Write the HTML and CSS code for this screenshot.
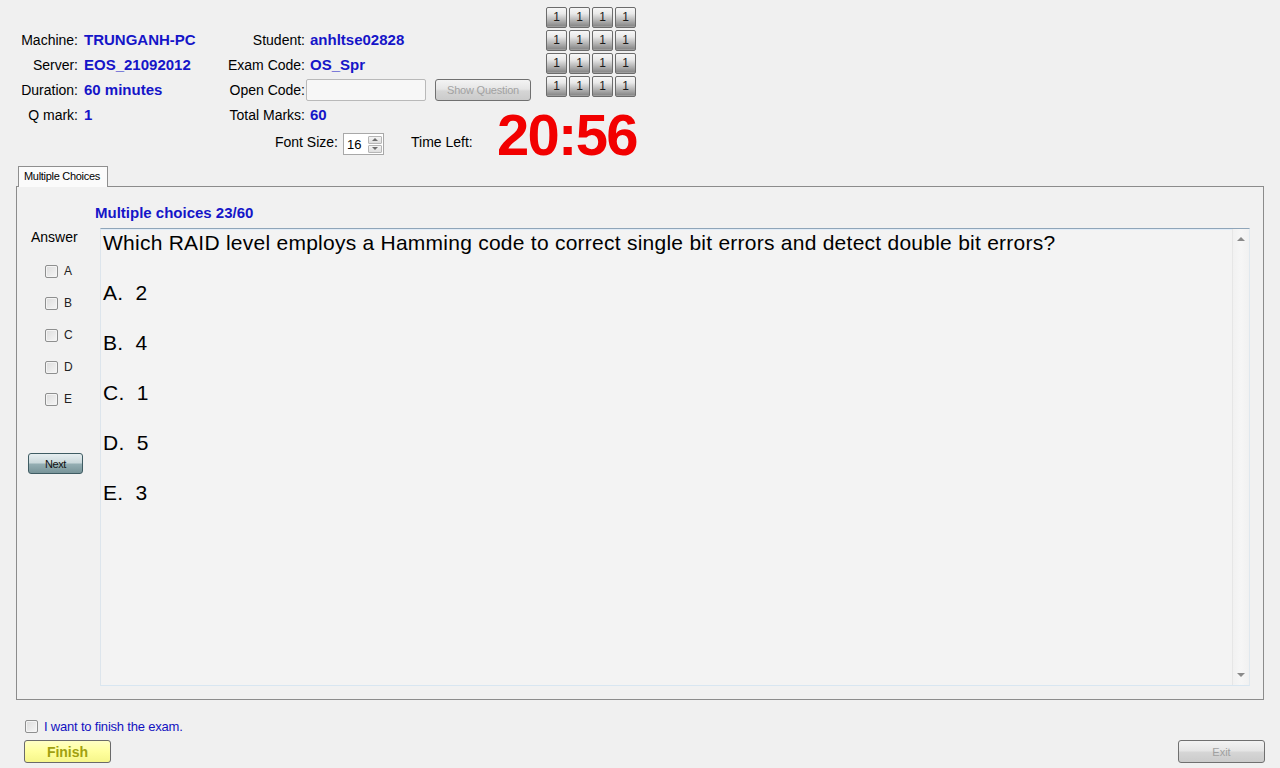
FILE: index.html
```html
<!DOCTYPE html>
<html>
<head>
<meta charset="utf-8">
<title>EOS Exam</title>
<link rel="stylesheet" href="styles.css">
</head>
<body>
<div class="header">
  <div class="info">
    <span class="lbl">Machine:</span><span class="val">TRUNGANH-PC</span><span class="lbl">Student:</span><span class="val v2">anhltse02828</span>
    <span class="lbl">Server:</span><span class="val">EOS_21092012</span><span class="lbl">Exam Code:</span><span class="val v2">OS_Spr</span>
    <span class="lbl">Duration:</span><span class="val">60 minutes</span><span class="lbl">Open Code:</span><span class="opencode"><span class="input"></span><span class="btn show">Show Question</span></span>
    <span class="lbl">Q mark:</span><span class="val">1</span><span class="lbl">Total Marks:</span><span class="val v2">60</span>
  </div>
  <div class="qgrid">
    <span class="qbtn">1</span><span class="qbtn">1</span><span class="qbtn">1</span><span class="qbtn">1</span>
    <span class="qbtn">1</span><span class="qbtn">1</span><span class="qbtn">1</span><span class="qbtn">1</span>
    <span class="qbtn">1</span><span class="qbtn">1</span><span class="qbtn">1</span><span class="qbtn">1</span>
    <span class="qbtn">1</span><span class="qbtn">1</span><span class="qbtn">1</span><span class="qbtn">1</span>
  </div>
  <div class="fontrow">
    <span class="fs-label">Font Size:</span>
    <span class="spinner"><span class="spin-val">16</span><span class="spin-btns"><span class="spin-up"><i class="tri-up"></i></span><span class="spin-down"><i class="tri-down"></i></span></span></span>
    <span class="tl-label">Time Left:</span>
    <span class="timer">20:56</span>
  </div>
</div>

<div class="tabs"><span class="tab">Multiple Choices</span></div>
<div class="panel">
  <div class="answers">
    <div class="ans-title">Answer</div>
    <div class="opt"><span class="cb"></span><span class="opt-l">A</span></div>
    <div class="opt"><span class="cb"></span><span class="opt-l">B</span></div>
    <div class="opt"><span class="cb"></span><span class="opt-l">C</span></div>
    <div class="opt"><span class="cb"></span><span class="opt-l">D</span></div>
    <div class="opt"><span class="cb"></span><span class="opt-l">E</span></div>
    <div class="next">Next</div>
  </div>
  <div class="qarea">
    <div class="qtitle">Multiple choices 23/60</div>
    <div class="qbox">
      <div class="qtext">
        <p>Which RAID level employs a Hamming code to correct single bit errors and detect double bit errors?</p>
        <p>A.  2</p>
        <p>B.  4</p>
        <p>C.  1</p>
        <p>D.  5</p>
        <p>E.  3</p>
      </div>
      <div class="vscroll"><i class="sb-up"></i><i class="sb-down"></i></div>
    </div>
  </div>
</div>

<div class="finish-check"><span class="cb"></span><span class="fc-text">I want to finish the exam.</span></div>
<div class="bottom">
  <span class="btn finish">Finish</span>
  <span class="btn exit">Exit</span>
</div>
</body>
</html>
```

FILE: styles.css
```css
html, body {
  margin: 0;
  padding: 0;
  width: 1280px;
  height: 768px;
  overflow: hidden;
  background: #f0f0f0;
  font-family: "Liberation Sans", Arial, sans-serif;
  color: #000;
}

.header {
  display: grid;
  grid-template-columns: 545px auto;
  grid-template-rows: 128px 28px;
  height: 166px;
}

.info {
  display: grid;
  grid-template-columns: 78px 144px 83px auto;
  grid-auto-rows: 25px;
  align-items: center;
  padding-top: 27px;
  font-size: 14px;
}

.lbl {
  text-align: right;
  white-space: nowrap;
}

.val {
  padding-left: 6px;
  font-size: 15px;
  font-weight: bold;
  color: #1515c8;
  white-space: nowrap;
}

.val.v2 {
  padding-left: 5px;
}

.opencode {
  display: flex;
  align-items: center;
}

.input {
  margin-left: 1px;
  width: 118px;
  height: 20px;
  border: 1px solid #b9b9b9;
  border-radius: 2px;
  background: #f7f7f7;
}

.btn {
  display: inline-flex;
  align-items: center;
  justify-content: center;
  box-sizing: border-box;
  border: 1px solid #707070;
  border-radius: 3px;
  background: linear-gradient(#f3f3f3 0%, #e6e6e6 45%, #d5d5d5 55%, #cbcbcb 100%);
  white-space: nowrap;
}

.show {
  margin-left: 9px;
  width: 96px;
  height: 22px;
  font-size: 11px;
  letter-spacing: -0.2px;
  color: #a2a2a2;
}

.qgrid {
  display: grid;
  grid-template-columns: repeat(4, 21px);
  grid-auto-rows: 21px;
  gap: 2px;
  padding-top: 7px;
  margin-left: 1px;
  align-content: start;
}

.qbtn {
  display: flex;
  align-items: center;
  justify-content: center;
  box-sizing: border-box;
  border: 1px solid #6c6c6c;
  border-radius: 2px;
  background: linear-gradient(#f7f7f7 0%, #e9e9e9 30%, #b5b5b5 65%, #8c8c8c 92%, #a5a5a5 100%);
  font-size: 12px;
  color: #1a1a1a;
  padding-bottom: 2px;
}

.fontrow {
  grid-column: 1 / 3;
  display: flex;
  align-items: center;
  font-size: 14px;
}

.fs-label {
  width: 338px;
  text-align: right;
}

.spinner {
  margin-left: 5px;
  margin-top: 4px;
  width: 41px;
  height: 22px;
  box-sizing: border-box;
  border: 1px solid #a8a8a8;
  background: #fff;
  display: flex;
  align-items: center;
  justify-content: space-between;
}

.spin-val {
  padding-left: 3px;
  font-size: 13px;
}

.spin-btns {
  display: flex;
  flex-direction: column;
  gap: 1px;
  margin-right: 1px;
}

.spin-up, .spin-down {
  width: 14px;
  height: 8px;
  box-sizing: border-box;
  border: 1px solid #b6b6b6;
  border-radius: 1px;
  background: linear-gradient(#f4f4f4, #dedede);
  display: flex;
  align-items: center;
  justify-content: center;
}

.tri-up {
  width: 0;
  height: 0;
  border-left: 3px solid transparent;
  border-right: 3px solid transparent;
  border-bottom: 3px solid #6d6d6d;
}

.tri-down {
  width: 0;
  height: 0;
  border-left: 3px solid transparent;
  border-right: 3px solid transparent;
  border-top: 3px solid #6d6d6d;
}

.tl-label {
  margin-left: 27px;
  width: 86px;
}

.timer {
  font-size: 58px;
  font-weight: bold;
  color: #f20000;
  letter-spacing: -1.7px;
  line-height: 44px;
  margin-bottom: 15px;
  white-space: nowrap;
}

.tabs {
  display: flex;
  padding-left: 18px;
}

.tab {
  position: relative;
  z-index: 1;
  box-sizing: border-box;
  width: 90px;
  height: 21px;
  margin-bottom: -1px;
  padding-left: 5px;
  border: 1px solid #8f8f8f;
  border-bottom: none;
  background: #fbfbfb;
  font-size: 11px;
  letter-spacing: -0.3px;
  line-height: 19px;
  white-space: nowrap;
}

.panel {
  margin-left: 16px;
  width: 1248px;
  height: 514px;
  box-sizing: border-box;
  border: 1px solid #8c8c8c;
  background: #f1f1f1;
  display: flex;
}

.answers {
  width: 78px;
  display: flex;
  flex-direction: column;
}

.ans-title {
  margin-top: 40px;
  padding-left: 14px;
  font-size: 14px;
  line-height: 20px;
}

.opt {
  display: flex;
  align-items: center;
  height: 32px;
  padding-left: 28px;
}

.ans-title + .opt {
  margin-top: 8px;
}

.cb {
  display: inline-block;
  width: 13px;
  height: 13px;
  box-sizing: border-box;
  border: 1px solid #8e8f8f;
  border-radius: 2px;
  background: linear-gradient(135deg, #dcdcdc, #f6f6f6);
  box-shadow: inset 0 0 0 1px #f4f4f4;
}

.opt-l {
  margin-left: 6px;
  font-size: 12px;
  color: #222;
}

.next {
  margin-top: 38px;
  margin-left: 11px;
  width: 55px;
  height: 21px;
  box-sizing: border-box;
  border: 1px solid #3f5c63;
  border-radius: 3px;
  background: linear-gradient(#e6eef0 0%, #cbd9dc 45%, #93adb2 55%, #789499 100%);
  display: flex;
  align-items: center;
  justify-content: center;
  font-size: 11px;
  letter-spacing: -0.4px;
  color: #111;
}

.qarea {
  display: flex;
  flex-direction: column;
}

.qtitle {
  margin-top: 16px;
  height: 20px;
  line-height: 20px;
  font-size: 15px;
  font-weight: bold;
  color: #1515c8;
  white-space: nowrap;
}

.qbox {
  margin-top: 5px;
  margin-left: 5px;
  width: 1150px;
  height: 458px;
  box-sizing: border-box;
  border-top: 1px solid #8fa5b9;
  border-left: 1px solid #dde5ec;
  border-right: 1px solid #e0e8ee;
  border-bottom: 1px solid #d8e6f1;
  box-shadow: inset 0 1px 0 #e1ecf7;
  background: #f3f3f3;
  display: flex;
}

.qtext {
  flex: 1;
  padding: 2px 0 0 2px;
  font-size: 21px;
  letter-spacing: 0.25px;
  color: #000;
}

.qtext p {
  margin: 0 0 26px 0;
  line-height: 24px;
  white-space: pre;
}

.vscroll {
  width: 16px;
  border-left: 1px solid #e6e6e6;
  background: linear-gradient(90deg, #f1f1f1, #f6f6f6 50%, #f1f1f1);
  display: flex;
  flex-direction: column;
  justify-content: space-between;
  align-items: center;
  padding: 8px 0 8px 0;
}

.sb-up {
  width: 0;
  height: 0;
  border-left: 4px solid transparent;
  border-right: 4px solid transparent;
  border-bottom: 4px solid #8a8a8a;
}

.sb-down {
  width: 0;
  height: 0;
  border-left: 4px solid transparent;
  border-right: 4px solid transparent;
  border-top: 4px solid #8a8a8a;
}

.finish-check {
  display: flex;
  align-items: center;
  margin-top: 18px;
  padding-left: 25px;
  height: 16px;
}

.fc-text {
  margin-left: 6px;
  font-size: 13px;
  letter-spacing: -0.2px;
  color: #1212c0;
}

.bottom {
  display: flex;
  justify-content: space-between;
  margin-top: 6px;
  padding: 0 15px 0 24px;
}

.finish {
  width: 87px;
  height: 23px;
  border-color: #6a6a6a;
  background: linear-gradient(#ffffc4 0%, #ffff9e 50%, #f6f68a 100%);
  font-size: 14px;
  font-weight: bold;
  color: #a0a010;
}

.exit {
  width: 87px;
  height: 23px;
  font-size: 11px;
  color: #a0a0a0;
}
```
